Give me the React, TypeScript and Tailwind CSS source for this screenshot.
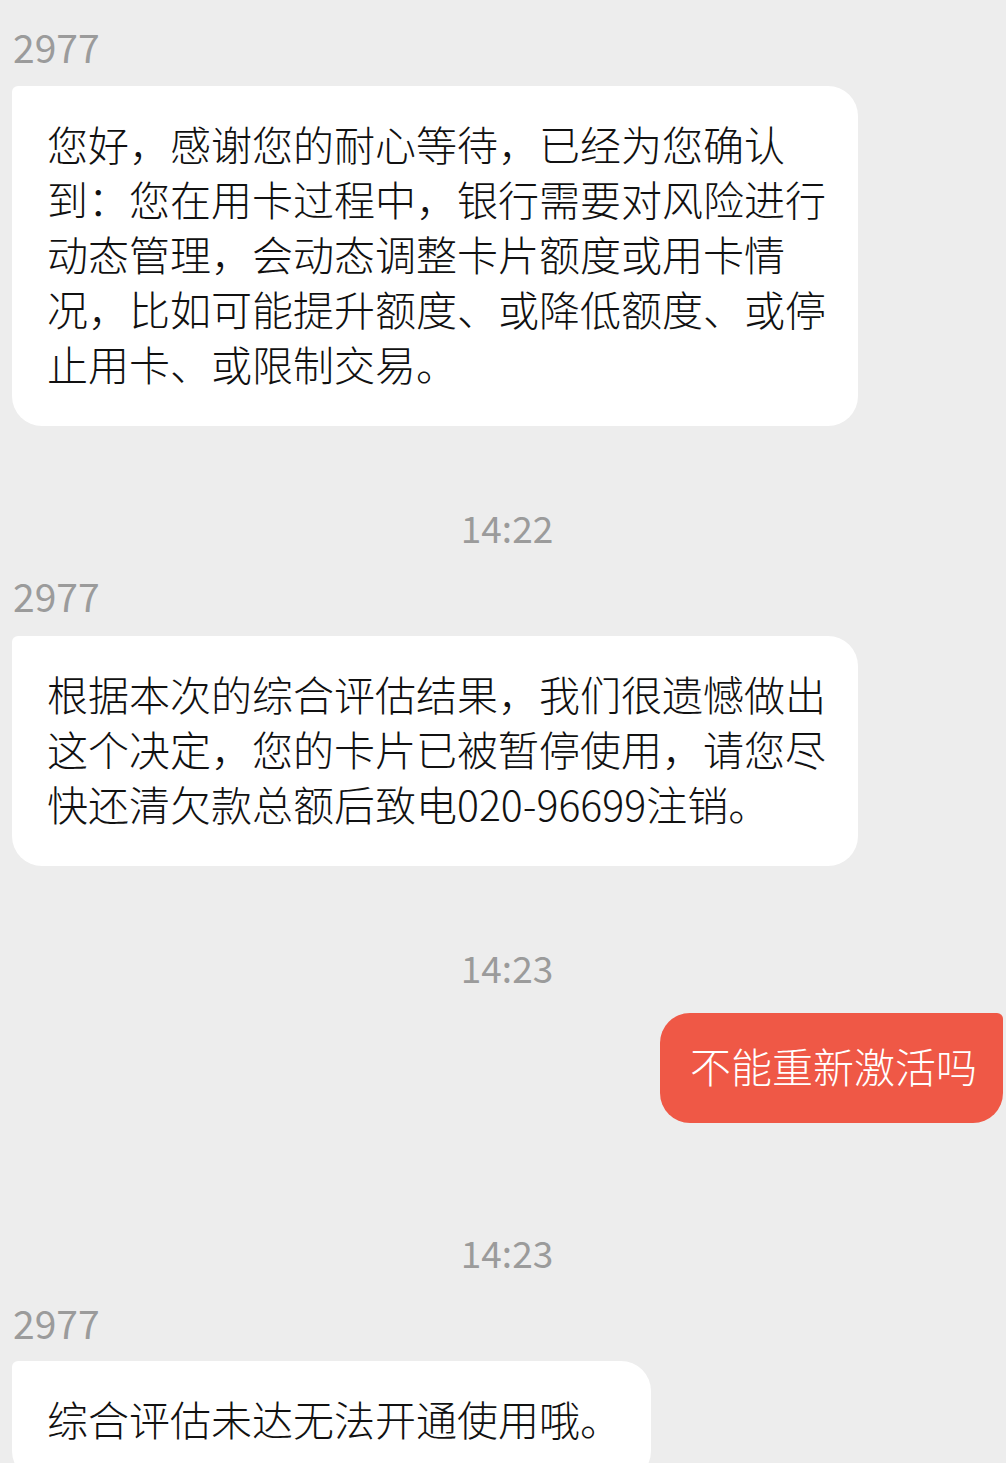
import React from "react";

const font = "font-['Noto_Sans_CJK_SC','Noto_Sans',sans-serif]";

function Sender({ name, className }: { name: string; className?: string }) {
    return (
        <div className={`shrink-0 h-[56px] leading-[50px] pl-[13px] text-[39px] text-[#9b9b9b] ${className ?? ""}`}>
            {name}
        </div>
    );
}

function Time({ time, className }: { time: string; className?: string }) {
    return (
        <div className={`shrink-0 h-[56px] leading-[50px] text-center pl-[8px] text-[37px] text-[#9b9b9b] ${className ?? ""}`}>
            {time}
        </div>
    );
}

function Incoming({ children, className }: { children: React.ReactNode; className?: string }) {
    return (
        <div className={`shrink-0 ml-[12px] self-start max-w-[846px] bg-white rounded-[30px] rounded-tl-[6px] pl-[35px] pr-[30px] pt-[30px] pb-[35px] text-[41px] font-light leading-[55px] text-[#111111] ${className ?? ""}`}>
            {children}
        </div>
    );
}

export default function App() {
    return (
        <div className={`${font} w-[1006px] h-[1463px] overflow-hidden bg-[#ededed] flex flex-col pt-[21px]`}>
            <Sender name="2977" />
            <Incoming className="mt-[9px]">
                您好，感谢您的耐心等待，已经为您确认到：您在用卡过程中，银行需要对风险进行动态管理，会动态调整卡片额度或用卡情况，比如可能提升额度、或降低额度、或停止用卡、或限制交易。
            </Incoming>

            <Time time="14:22" className="mt-[76px]" />
            <Sender name="2977" className="mt-[12px]" />
            <Incoming className="mt-[10px]">
                根据本次的综合评估结果，我们很遗憾做出这个决定，您的卡片已被暂停使用，请您尽快还清欠款总额后致电020-96699注销。
            </Incoming>

            <Time time="14:23" className="mt-[76px]" />
            <div className="shrink-0 mt-[15px] self-end mr-[3px] bg-[#ef5846] text-white font-light rounded-[30px] rounded-tr-[6px] pl-[30px] pr-[26px] pt-[24px] pb-[30px] text-[41px] leading-[56px]">
                不能重新激活吗
            </div>

            <Time time="14:23" className="mt-[104px]" />
            <Sender name="2977" className="mt-[14px]" />
            <Incoming className="mt-[8px]">综合评估未达无法开通使用哦。</Incoming>
        </div>
    );
}
